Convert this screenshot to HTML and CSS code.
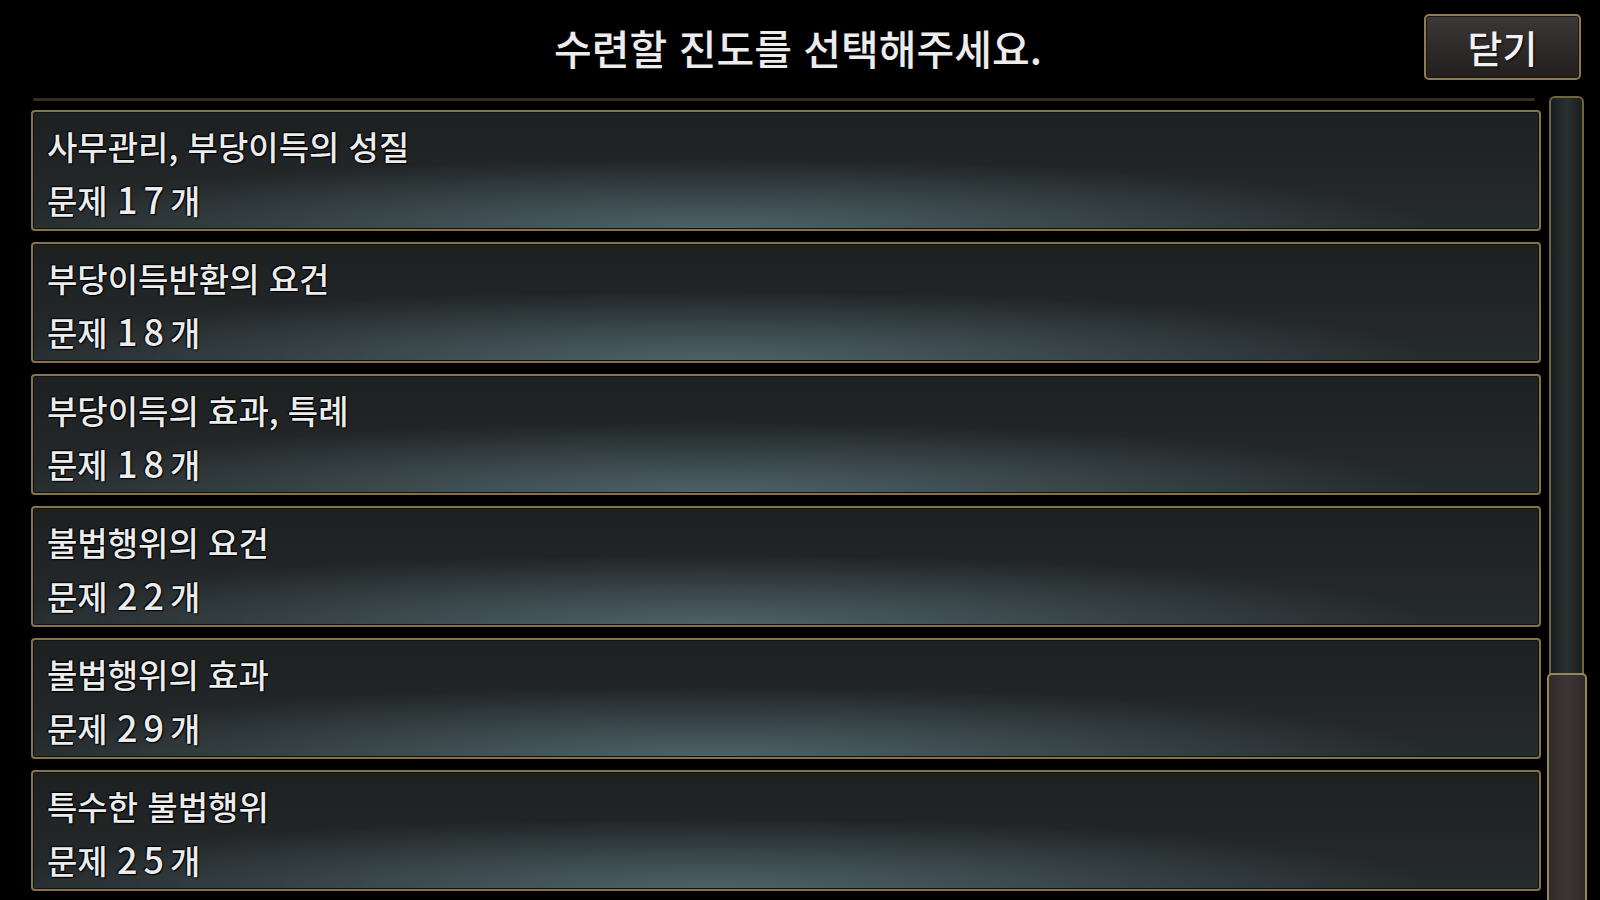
FILE: index.html
```html
<!DOCTYPE html>
<html lang="ko">
  <head>
    <meta charset="UTF-8" />
    <meta name="viewport" content="width=device-width, initial-scale=1" />
    <title>진도 선택</title>
    <link rel="stylesheet" href="styles.css">
  </head>
  <body>
    <header>
      <span></span>
      <h1 class="title">수련할 진도를 선택해주세요.</h1>
      <button class="close">닫기</button>
    </header>
    <main>
      <div class="list">
        <div class="frame-line"></div>
        <div class="row">
          <div class="name">사무관리, 부당이득의 성질</div>
          <div class="count">문제 <span class="num">17</span>개</div>
        </div>
        <div class="row">
          <div class="name">부당이득반환의 요건</div>
          <div class="count">문제 <span class="num">18</span>개</div>
        </div>
        <div class="row">
          <div class="name">부당이득의 효과, 특례</div>
          <div class="count">문제 <span class="num">18</span>개</div>
        </div>
        <div class="row">
          <div class="name">불법행위의 요건</div>
          <div class="count">문제 <span class="num">22</span>개</div>
        </div>
        <div class="row">
          <div class="name">불법행위의 효과</div>
          <div class="count">문제 <span class="num">29</span>개</div>
        </div>
        <div class="row">
          <div class="name">특수한 불법행위</div>
          <div class="count">문제 <span class="num">25</span>개</div>
        </div>
      </div>
      <div class="scrollbar">
        <div class="thumb"></div>
      </div>
    </main>
  </body>
</html>
```

FILE: styles.css
```css
* {
  box-sizing: border-box;
}

html,
body {
  background-color: #000;
  color: #ececec;
  font-family: "Noto Sans CJK KR", "Noto Sans", sans-serif;
  height: 100%;
  margin: 0;
  overflow: hidden;
}

body {
  display: flex;
  flex-direction: column;
}

header {
  align-items: center;
  display: grid;
  grid-template-columns: 1fr auto 1fr;
  height: 98px;
  padding: 14px 19px 18px;
}

.title {
  font-size: 41px;
  font-weight: 500;
  line-height: 1;
  margin: 0 0 0 -4px;
  text-shadow: 0 0 2px #000;
}

.close {
  background: linear-gradient(#3b3736, #221f1e);
  border: 2px solid #8c7c4b;
  border-radius: 5px;
  box-shadow: inset 0 0 0 1px #1a1714;
  color: #f2f2f2;
  font-family: inherit;
  font-size: 38px;
  font-weight: 500;
  height: 66px;
  justify-self: end;
  line-height: 1;
  padding: 0;
  text-shadow: 1px 1px 2px #000;
  width: 157px;
}

main {
  display: flex;
  flex-grow: 1;
  gap: 8px;
  padding: 0 16px 0 31px;
}

.list {
  display: flex;
  flex-direction: column;
  flex-grow: 1;
  gap: 11px;
}

.frame-line {
  background-color: #332d1a;
  border-radius: 2px;
  height: 3px;
  margin: 0 6px -2px 2px;
}

.row {
  background:
    radial-gradient(ellipse 48% 60% at 45% 100%, rgba(82, 104, 110, 0.9), rgba(82, 104, 110, 0)),
    linear-gradient(#1d2021, #262b2d);
  border: 2px solid #85744a;
  border-radius: 4px;
  box-shadow: inset 0 0 0 1px #0f1112;
  flex-shrink: 0;
  font-size: 33px;
  font-weight: 500;
  height: 121px;
  line-height: 52px;
  padding: 8px 14px 0;
  text-shadow: 1px 1px 1px #000, -1px -1px 1px #000, 0 0 2px #000;
}

.num {
  font-size: 36px;
  letter-spacing: 6px;
}

.scrollbar {
  background: linear-gradient(90deg, #1a1d1e, #2a3031 50%, #1a1d1e);
  border: 2px solid #6f6340;
  border-radius: 6px 6px 0 0;
  flex-shrink: 0;
  margin-top: -2px;
  position: relative;
  width: 35px;
}

.thumb {
  background: linear-gradient(90deg, #2e2a2b, #3d3637 50%, #2c2829);
  border: 2px solid #978754;
  border-radius: 5px 5px 0 0;
  bottom: -20px;
  left: -4px;
  position: absolute;
  right: -5px;
  top: 575px;
}
```
